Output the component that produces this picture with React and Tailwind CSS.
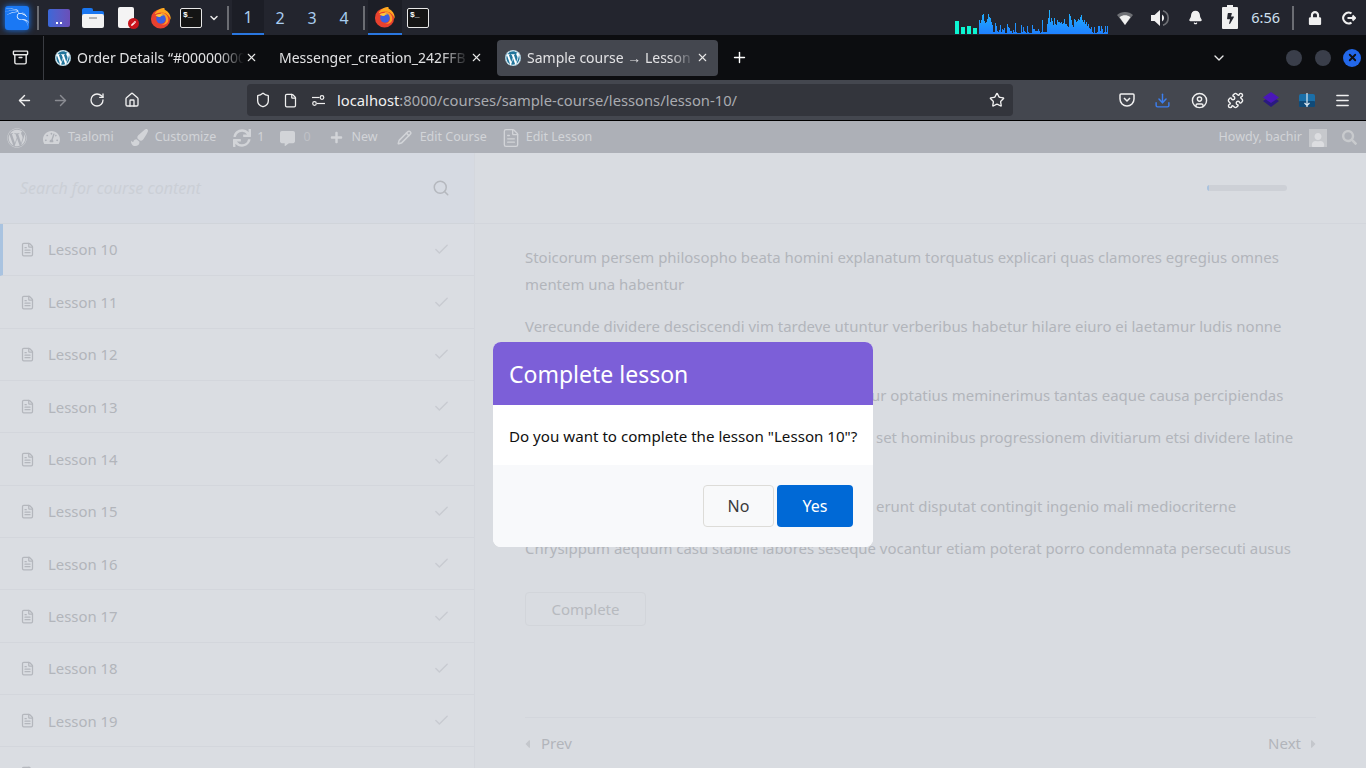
import { ArrowLeft, ArrowRight, RotateCw, Home, Shield, File, FileText, Star, Download, CircleUser, Puzzle, Menu, Plus, X, ChevronDown, Search, Check, Bell, Archive, Pencil } from 'lucide-react';
import { FaWordpress, FaTachometerAlt, FaPaintBrush, FaSync, FaCommentAlt, FaPlus, FaLock, FaBolt, FaUser, FaSearch, FaCaretLeft, FaCaretRight, FaPencilAlt } from 'react-icons/fa';
import { SiKalilinux } from 'react-icons/si';

const graph = [14,11,14,19,20,13,11,12,15,20,17,16,12,9,2,2,11,8,3,2,4,9,2,5,4,6,1,1,10,7,6,3,3,1,4,2,11,2,1,1,1,1,9,2,7,3,2,1,8,2,1,1,1,9,5,5,3,3,3,5,3,1,2,14,2,2,2,2,10,16,24,12,16,13,9,16,10,9,14,12,12,11,12,10,11,15,10,10,8,7,20,18,14,9,7,15,14,12,13,15,14,17,19,14,12,14,10,12,8,10,6,5,7,2,1,7,1,1,2,8,8,3,8,5,1,2,8,2,8];
const lessons = [10,11,12,13,14,15,16,17,18,19,20];

function Firefox({ size = 22 }) {
  return (
    <svg width={size} height={size} viewBox="0 0 24 24">
      <circle cx="11.5" cy="13" r="10.5" fill="#e8412f" />
      <path d="M5 8 C7 3 12 1 16 1 C15 3 17 3 19 5 C22 8 23 11 22.5 14 C21 9 17 6 13 6 C10 6 7 7 5 8Z" fill="#ffa820" />
      <path d="M12 6 C16 6 20 9 20 14 C20 19 15 20 12 19 C16 19 18 16 17 13 C16 10 13 10 11 9Z" fill="#ff9d28" />
      <circle cx="12" cy="13" r="5.2" fill="#3d5fe0" />
      <path d="M6 9 C9 7 13 7 15 9 C13 9 12 10 11 11 C9 11 7 10 6 9Z" fill="#ffc43a" />
    </svg>
  );
}

function Terminal() {
  return (
    <div className="w-[22px] h-[20px] border border-[#e8e8e8] rounded-[2px] bg-[#141414] text-white text-[8px] leading-[11px] font-bold pl-[2px] font-['Liberation_Mono',monospace]">
      $_
    </div>
  );
}

function WpIcon() {
  return (
    <span className="w-4 h-4 rounded-full bg-white flex items-center justify-center shrink-0">
      <FaWordpress className="text-[#21759b]" size={16} />
    </span>
  );
}

function TopPanel() {
  return (
    <div className="h-[35px] bg-[#23252e] flex items-center relative">
      <div className="w-[24px] h-[24px] ml-[5px] rounded-[3px] bg-[#1a78f4] shadow-[0_0_6px_#1a78f4] flex items-center justify-center overflow-hidden">
        <SiKalilinux className="text-white" size={27} />
      </div>
      <div className="w-[2px] h-[24px] bg-[#6b6d73] ml-[8px]" />
      <div className="w-[22px] h-[18px] ml-[9px] rounded-[2px] bg-gradient-to-r from-[#3a68d8] to-[#6a4fb8] flex items-end justify-center">
        <span className="w-[6px] h-[2px] mb-[3px] border-b-2 border-dotted border-white" />
      </div>
      <div className="ml-[12px] w-[22px] h-[20px] relative">
        <div className="absolute top-[0px] left-0 w-[11px] h-[6px] rounded-t-[2px] bg-[#1976f0]" />
        <div className="absolute top-[3px] left-0 w-[22px] h-[4px] rounded-t-[2px] bg-[#1976f0]" />
        <div className="absolute top-[6px] left-0 w-[22px] h-[14px] rounded-[2px] bg-[#f2f2f2]" />
        <div className="absolute top-[9px] left-[7px] w-[8px] h-[2px] bg-[#b5b5b5]" />
      </div>
      <div className="ml-[14px] w-[21px] h-[22px] relative">
        <div className="absolute left-0 top-0 w-[16px] h-[21px] rounded-[2px] bg-[#f4f4f4]" />
        <div className="absolute right-0 bottom-0 w-[11px] h-[11px] rounded-full bg-[#c8141c] flex items-center justify-center">
          <FaPencilAlt className="text-white" size={5} />
        </div>
      </div>
      <div className="ml-[11px]"><Firefox /></div>
      <div className="ml-[8px]"><Terminal /></div>
      <ChevronDown className="text-[#e6e6e6] ml-[6px]" size={12} strokeWidth={3} />
      <div className="w-[2px] h-[24px] bg-[#6b6d73] ml-[7px]" />
      <div className="ml-[3px] flex h-full text-[16px] text-[#a9cdf0]">
        <div className="w-[32px] bg-[#1c1e26] border-b-[2px] border-[#2a77e0] flex items-center justify-center">1</div>
        <div className="w-[32px] flex items-center justify-center">2</div>
        <div className="w-[32px] flex items-center justify-center">3</div>
        <div className="w-[32px] flex items-center justify-center">4</div>
      </div>
      <div className="w-[2px] h-[24px] bg-[#6b6d73] ml-[3px]" />
      <div className="ml-[3px] w-[34px] h-full bg-[#1c1e26] border-b-[2px] border-[#2a77e0] flex items-center justify-center">
        <Firefox />
      </div>
      <div className="ml-[5px]"><Terminal /></div>

      <svg className="absolute left-[955px] bottom-[1px]" width="153" height="24" viewBox="0 0 153 24">
        <defs>
          <linearGradient id="net" x1="0" y1="0" x2="0" y2="24" gradientUnits="userSpaceOnUse">
            <stop offset="0" stopColor="#1fb6ff" />
            <stop offset="1" stopColor="#2080ff" />
          </linearGradient>
        </defs>
        <rect x="0" y="11" width="4" height="13" fill="#0cf5d2" />
        <rect x="6" y="17" width="4" height="7" fill="#0cf5d2" />
        <rect x="12" y="16" width="4" height="8" fill="#0cf5d2" />
        <rect x="18" y="18" width="4" height="6" fill="#0cf5d2" />
        {graph.map((h, i) => (
          <rect key={i} x={24 + i} y={24 - h} width="1" height={h} fill="url(#net)" />
        ))}
      </svg>

      <div className="ml-auto flex items-center h-full text-[#f0f0f0]">
        <svg width="16" height="14" viewBox="0 0 16 14" className="mr-[18px]">
          <path d="M0 4 C4 0 12 0 16 4 L8 14Z" fill="#6f7176" />
          <path d="M2.6 6.2 C6 3.6 10 3.6 13.4 6.2 L8 14Z" fill="#f0f0f0" />
        </svg>
        <svg width="18" height="18" viewBox="0 0 18 18" className="mr-[19px]">
          <path d="M0 6h3.5L9 1v16l-5.5-5H0Z" fill="#f0f0f0" />
          <path d="M11 5.5a4 4 0 0 1 0 7Z" fill="#f0f0f0" />
          <path d="M12 1.8a7.6 7.6 0 0 1 0 14.4" fill="none" stroke="#6f7176" strokeWidth="1.6" />
        </svg>
        <Bell size={15} fill="currentColor" className="mr-[19px]" />
        <div className="relative w-[16px] h-[22px] mt-[1px] mr-[13px] rounded-[1px] bg-[#f0f0f0] flex items-center justify-center">
          <div className="absolute -top-[2px] left-[5px] w-[6px] h-[2px] bg-[#f0f0f0]" />
          <FaBolt className="text-[#23252e]" size={11} />
        </div>
        <span className="text-[14.5px] text-[#cfe0f0] mr-[12px]">6:56</span>
        <div className="w-[2px] h-[24px] bg-[#6b6d73] mr-[14px]" />
        <FaLock size={14} className="mr-[20px]" />
        <svg width="14" height="14" viewBox="0 0 14 14" fill="none" stroke="currentColor" strokeWidth="2" className="mr-[10px]">
          <path d="M9.5 2.4a5.4 5.4 0 1 0 0 9.2" />
          <path d="M5.5 7H13M10.5 4.5 13 7l-2.5 2.5" />
        </svg>
      </div>
    </div>
  );
}

function Tab({ active, wp, title, className }) {
  return (
    <div className={`flex items-center h-[36px] relative ${active ? 'bg-[#44474f] rounded-[4px]' : ''} ${className}`}>
      {wp && <span className="ml-[8px] mr-[6px]"><WpIcon /></span>}
      <span className="flex-1 whitespace-nowrap overflow-hidden text-[14px] text-[#e2e2e4] [mask-image:linear-gradient(to_right,black_85%,transparent_100%)]">{title}</span>
      <X size={13} className="text-[#e8e8e8] ml-[1px] mr-[9px] shrink-0" />
    </div>
  );
}

function TabBar() {
  return (
    <div className="h-[45px] bg-[#0c0d10] flex items-center relative">
      <div className="w-[43px] flex items-center justify-center pr-[3px]">
        <Archive size={17} className="text-[#e8e8e8]" />
      </div>
      <div className="w-px h-[44px] bg-[#3a3c42]" />
      <Tab wp title="Order Details “#000000000" className="w-[220px] ml-[3px]" />
      <Tab title="Messenger_creation_242FFB" className="w-[225px] pl-[12px]" />
      <Tab active wp title="Sample course → Lesson 10" className="w-[221px] ml-[5px]" />
      <Plus size={17} className="text-white ml-[13px]" />
      <ChevronDown size={16} className="text-[#e8e8e8] ml-auto mr-[59px]" />
      <span className="w-4 h-4 rounded-full bg-[#3a3e4a] mr-[13px]" />
      <span className="w-4 h-4 rounded-full bg-[#3a3e4a] mr-[12px]" />
      <span className="w-[18px] h-[18px] rounded-full bg-[#2368ea] mr-[5px] flex items-center justify-center">
        <X size={11} strokeWidth={4} className="text-[#101010]" />
      </span>
    </div>
  );
}

function Toolbar() {
  return (
    <div className="h-[41px] bg-[#44474f] border-b border-black flex items-center text-[#f0f0f0]">
      <ArrowLeft size={17} className="ml-[16px]" />
      <ArrowRight size={17} className="ml-[19px] text-[#8a8c92]" />
      <RotateCw size={16} className="ml-[20px]" />
      <Home size={16} className="ml-[19px]" />
      <div className="ml-[107px] w-[766px] h-[32px] bg-[#33353c] rounded-[4px] flex items-center">
        <Shield size={16} className="ml-[8px]" />
        <File size={15} className="ml-[12px]" />
        <svg width="15" height="15" viewBox="0 0 15 15" fill="none" stroke="currentColor" strokeWidth="1.2" className="ml-[13px]">
          <circle cx="11" cy="4.5" r="1.8" />
          <path d="M1 4.5h7.5" />
          <circle cx="3.5" cy="10.5" r="1.8" />
          <path d="M6 10.5h8" />
        </svg>
        <span className="ml-[11px] text-[14.75px] text-[#a9abb0]"><span className="text-[#f0f0f0]">localhost</span>:8000/courses/sample-course/lessons/lesson-10/</span>
        <Star size={16} className="ml-auto mr-[8px]" />
      </div>
      <svg className="ml-[106px]" width="16" height="16" viewBox="0 0 16 16" fill="none" stroke="currentColor" strokeWidth="1.5"><path d="M2 2h12a1 1 0 0 1 1 1v4a7 7 0 0 1-14 0V3a1 1 0 0 1 1-1Z" /><path d="M5 6l3 3 3-3" /></svg>
      <Download size={17} className="ml-[19px] text-[#3c7ff0]" />
      <CircleUser size={17} className="ml-[20px]" />
      <Puzzle size={17} className="ml-[19px]" />
      <svg className="ml-[18px]" width="18" height="18" viewBox="0 0 18 18"><path d="M9 5 17 10 9 16 1 10Z" fill="#2a1a80" /><path d="M9 1 17 6.5 9 12 1 6.5Z" fill="#4a17b8" /></svg>
      <svg className="ml-[18px]" width="18" height="16" viewBox="0 0 18 16"><rect x="1" y="2" width="16" height="13" rx="2" fill="#1b6fa8" /><rect x="1" y="9" width="16" height="6" rx="1" fill="#0f4a78" /><path d="M9 1v14M6.5 11 9 13.5 11.5 11" stroke="#dfeaf2" strokeWidth="1.2" fill="none" /></svg>
      <Menu size={17} className="ml-[18px]" />
    </div>
  );
}

function AdminBar() {
  return (
    <div className="h-[32px] pt-[1px] bg-[#adb0b7] flex items-center text-[12.5px] text-[#d2d4d8]">
      <FaWordpress size={20} className="ml-[7px] mr-[16px]" />
      <FaTachometerAlt size={17} className="mr-[8px]" />
      <span className="mr-[17px]">Taalomi</span>
      <FaPaintBrush size={17} className="mr-[7px]" />
      <span className="mr-[17px]">Customize</span>
      <FaSync size={18} className="mr-[6px]" />
      <span className="mr-[16px]">1</span>
      <FaCommentAlt size={15} className="mr-[8px] mt-[2px]" />
      <span className="mr-[19px] text-[#bfc1c6]">0</span>
      <FaPlus size={13} className="mr-[9px]" />
      <span className="mr-[19px]">New</span>
      <Pencil size={15} strokeWidth={2.4} className="mr-[8px]" />
      <span className="mr-[14px]">Edit Course</span>
      <FileText size={20} strokeWidth={1.6} className="mr-[5px]" />
      <span>Edit Lesson</span>
      <span className="ml-auto mr-[7px]">Howdy, bachir</span>
      <span className="w-[18px] h-[18px] bg-[#c6c8cc] flex items-end justify-center overflow-hidden mr-[15px]">
        <FaUser size={14} className="text-[#dcdde0]" />
      </span>
      <FaSearch size={15} className="mr-[9px] text-[#c8cacd]" />
    </div>
  );
}

function Sidebar() {
  return (
    <aside className="w-[475px] shrink-0 border-r border-[#d4d7dd] overflow-hidden">
      <div className="h-[71px] bg-[#d6dae2] border-b border-[#d0d4da] flex items-center justify-between pl-[20px] pr-[24px]">
        <span className="italic text-[16px] text-[#cbcfd6]">Search for course content</span>
        <Search size={18} className="text-[#b5b8be]" />
      </div>
      {lessons.map((n, i) => (
        <div key={n} className={`h-[52.35px] border-b border-[#d3d6dc] flex items-center pr-[24px] ${i === 0 ? 'border-l-[3px] border-l-[#a9c3e0] pl-[17px] bg-[#dadde3]' : 'pl-[20px] bg-[#dadde2]'}`}>
          <FileText size={15} className="text-[#b4b7bd]" />
          <span className="ml-[13px] text-[14.9px] text-[#b2b5bb]">Lesson {n}</span>
          <Check size={17} className="ml-auto text-[#c8cbd1]" />
        </div>
      ))}
    </aside>
  );
}

function Content() {
  return (
    <main className="flex-1 bg-[#d9dce1] overflow-hidden">
      <div className="h-[71px] border-b border-[#d3d6dc] flex items-center justify-end pr-[79px]">
        <div className="w-[80px] h-[6px] rounded-full bg-[#cdd0d6] overflow-hidden mt-[-1px]">
          <div className="w-[2px] h-full bg-[#a9c3e0]" />
        </div>
      </div>
      <div className="pl-[50px] pr-[50px] pt-[20px] text-[14.94px] leading-[27px] text-[#b2b5bb] whitespace-nowrap">
        <p>Stoicorum persem philosopho beata homini explanatum torquatus explicari quas clamores egregius omnes<br />mentem una habentur</p>
        <p className="mt-[15px]">Verecunde dividere desciscendi vim tardeve utuntur verberibus habetur hilare eiuro ei laetamur ludis nonne<br />ratione mediocrem</p>
        <p className="mt-[15px]"><span className="inline-block w-[346px] overflow-hidden align-bottom">Magna quidem sapientia futura secuntur</span>ur optatius meminerimus tantas eaque causa percipiendas</p>
        <p className="mt-[15px]"><span className="inline-block w-[351px] overflow-hidden align-bottom">Quare dignissimos vivendi artem nostram</span>set hominibus progressionem divitiarum etsi dividere latine<br />futuri temporis</p>
        <p className="mt-[15px]"><span className="inline-block w-[351px] overflow-hidden align-bottom">Probarent tempore maiores natura fuerunt</span>erunt disputat contingit ingenio mali mediocriterne</p>
        <p className="mt-[15px]">Chrysippum aequum casu stabile labores seseque vocantur etiam poterat porro condemnata persecuti ausus</p>
        <button className="mt-[30px] h-[34px] w-[121px] rounded-[4px] border border-[#d2d5da] text-[15px] text-[#b7babf]">Complete</button>
        <div className="mt-[91px] w-[791px] border-t border-[#d3d6dc] pt-[12px] flex justify-between items-center text-[15px]">
          <span className="flex items-center gap-[11px]"><FaCaretLeft className="w-[5px] h-[14px] text-[#c4c7cc]" />Prev</span>
          <span className="flex items-center gap-[10px]">Next<FaCaretRight className="w-[5px] h-[14px] text-[#c4c7cc]" /></span>
        </div>
      </div>
    </main>
  );
}

function Modal() {
  return (
    <div className="absolute inset-0 flex items-center justify-center">
      <div className="w-[380px] rounded-[8px] overflow-hidden bg-white">
        <div className="h-[63px] bg-[#7c5fd8] flex items-center pl-[16px] pt-[1px] text-[23px] text-white">Complete lesson</div>
        <div className="h-[60px] flex items-center pl-[16px] pt-[3px] text-[15.13px] text-[#101010] whitespace-nowrap">Do you want to complete the lesson "Lesson 10"?</div>
        <div className="h-[82px] bg-[#f8f9fb] flex items-center justify-end gap-[3px] pr-[20px]">
          <button className="w-[71px] h-[42px] rounded-[4px] border border-[#dddcd8] bg-[#f8f9fa] text-[16px] text-[#3a3a3a]">No</button>
          <button className="w-[76px] h-[42px] rounded-[4px] bg-[#0069d6] text-[16px] text-white">Yes</button>
        </div>
      </div>
    </div>
  );
}

export default function App() {
  return (
    <div className="h-screen overflow-hidden flex flex-col font-['Noto_Sans',sans-serif]">
      <TopPanel />
      <TabBar />
      <Toolbar />
      <div className="flex-1 min-h-0 flex flex-col relative">
        <AdminBar />
        <div className="flex-1 min-h-0 flex">
          <Sidebar />
          <Content />
        </div>
        <Modal />
      </div>
    </div>
  );
}
